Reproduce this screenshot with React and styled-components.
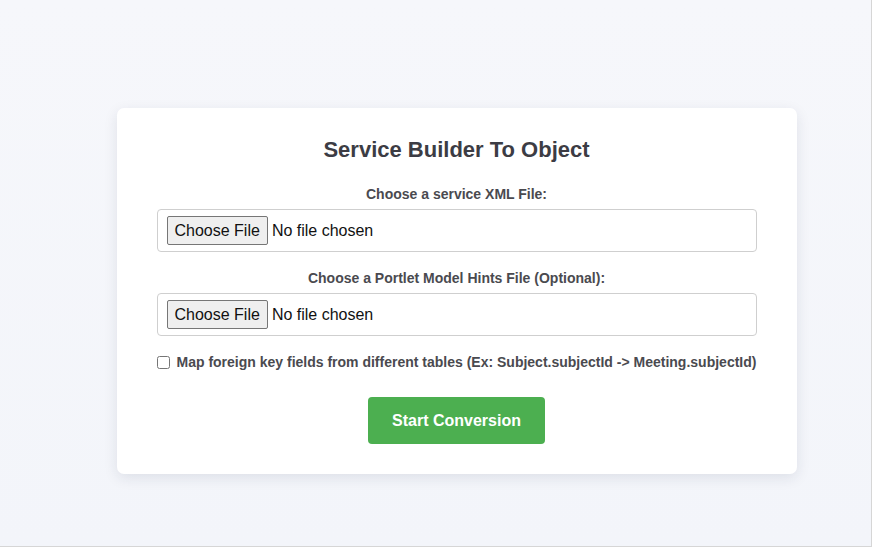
import React from "react";
import styled, { createGlobalStyle } from "styled-components";

const Global = createGlobalStyle`
  html, body { margin: 0; padding: 0; }
  body { font-family: "Liberation Sans", Arial, sans-serif; background: #f4f6fb; }
  * { box-sizing: border-box; }
`;

const Page = styled.div`
  width: 872px;
  height: 547px;
  background: linear-gradient(180deg, #f6f7fb 0%, #f3f5fa 100%);
  border-right: 1px solid #d6d6d6;
  border-bottom: 1px solid #d6d6d6;
  display: flex;
  justify-content: center;
  align-items: flex-start;
  padding: 108px 0 0 42px;
  overflow: hidden;
`;

const Card = styled.div`
  width: 680px;
  background: #fff;
  border-radius: 7px;
  box-shadow: 0 4px 14px rgba(30, 40, 70, 0.1);
  padding: 29px 40px 30px;
  display: flex;
  flex-direction: column;
  align-items: stretch;
`;

const Title = styled.h2`
  margin: 0 0 23px;
  font-size: 22px;
  line-height: 26px;
  font-weight: 700;
  color: #3c3c44;
  text-align: center;
`;

const Label = styled.label`
  display: block;
  font-size: 14px;
  line-height: 17px;
  font-weight: 700;
  color: #4a4a4f;
  text-align: center;
  margin-bottom: 6px;
`;

const FileBox = styled.input`
  display: block;
  width: 100%;
  height: 43px;
  padding: 6px 9px;
  border: 1px solid #cfcfcf;
  border-radius: 4px;
  font-family: "Liberation Sans", Arial, sans-serif;
  font-size: 16px;
  color: #111;
  background: #fff;
  margin-bottom: ${(p) => p.$mb}px;

  &::file-selector-button {
    font-family: "Liberation Sans", Arial, sans-serif;
    font-size: 16px;
    height: 29px;
    padding: 0 7px;
    margin-right: 4px;
    border: 1px solid #767676;
    border-radius: 2px;
    background: #efefef;
    color: #111;
  }
`;

const CheckRow = styled.label`
  display: flex;
  align-items: center;
  gap: 7px;
  font-size: 14px;
  line-height: 17px;
  font-weight: 700;
  color: #4a4a4f;
  margin-bottom: 26px;
  white-space: nowrap;
`;

const Check = styled.input`
  margin: 0;
  width: 13px;
  height: 13px;
`;

const Submit = styled.button`
  align-self: center;
  background: #4caf50;
  color: #fff;
  border: none;
  border-radius: 4px;
  height: 47px;
  padding: 0 24px;
  font-family: "Liberation Sans", Arial, sans-serif;
  font-size: 16px;
  line-height: 19px;
  font-weight: 700;
  cursor: pointer;
`;

export default function App() {
  return (
    <>
      <Global />
      <Page>
        <Card>
          <Title>Service Builder To Object</Title>
          <Label htmlFor="xml">Choose a service XML File:</Label>
          <FileBox id="xml" type="file" $mb={18} />
          <Label htmlFor="hints">Choose a Portlet Model Hints File (Optional):</Label>
          <FileBox id="hints" type="file" $mb={18} />
          <CheckRow>
            <Check type="checkbox" />
            Map foreign key fields from different tables (Ex: Subject.subjectId -&gt; Meeting.subjectId)
          </CheckRow>
          <Submit>Start Conversion</Submit>
        </Card>
      </Page>
    </>
  );
}
